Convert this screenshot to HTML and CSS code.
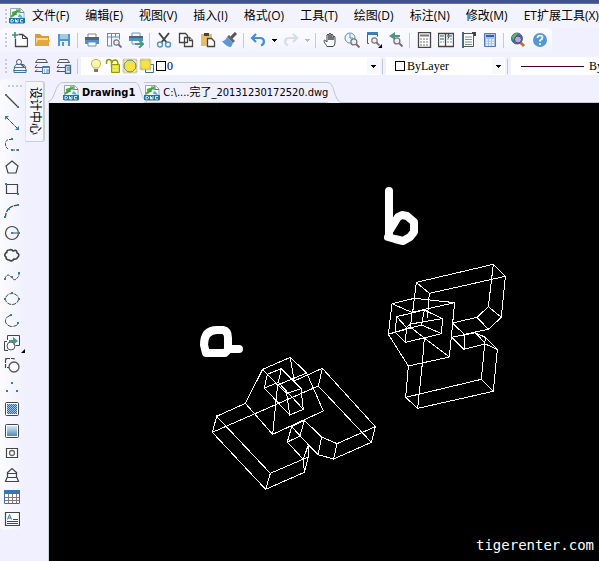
FILE: index.html
```html
<!DOCTYPE html>
<html lang="zh-CN">
<head>
<meta charset="utf-8">
<title>Drawing1</title>
<link rel="stylesheet" href="styles.css">
</head>
<body>
<svg class="defs" aria-hidden="true">
  <symbol id="dwg" viewBox="0 0 16 16"><path d="M1.500 .5h10l3.500 3.500v11.500h-13.500z" fill="#f4fbfb" stroke="#9aabb0"/><path d="M11 .5v4h4" fill="#fff" stroke="#6d8084"/><path d="M2 9l6-6M3 5l3-1 1 3" fill="none" stroke="#4caf3c" stroke-width="2"/><path d="M7 2h3v3M4 8l5-5" fill="none" stroke="#3a9a38" stroke-width="1.200"/><path d="M9 9l1-3 2 1 2 3z" fill="#4db1de"/><path d="M0 10h16v5H0z" fill="#1b76b0"/><path d="M2 11.500v2.500h1.500l1-1v-1l-1-.5zM6.500 11v3h1V12v2h1.500V11M14 11.500h-2.500v2.500H14" fill="none" stroke="#e4f6ff" stroke-width=".9"/></symbol>
  <symbol id="caret" viewBox="0 0 5 3"><path d="M0 0h5v1H4v1H3v1H2V2H1V1H0z"/></symbol>
  <symbol id="glass" viewBox="0 0 9 9"><circle cx="3.500" cy="3.500" r="2.700" fill="#eeedf7" stroke="#777" stroke-width="1.200"/><path d="M5.500 5.500l3 3" stroke="#806870" stroke-width="1.800"/></symbol>
  <symbol id="stack" viewBox="0 0 16 16"><path d="M3.500 1.500h8l2 3H1.500zM3 6.500l-2 3h12M3 11.500l-2 2h10" fill="none" stroke="#555"/></symbol>
</svg>
<header>
  <div class="titlebar"></div>
  <nav class="menu" aria-label="菜单">
    <span class="grip"></span>
    <svg class="icon"><use href="#dwg"/></svg>
    <a href="#">文件(F)</a><a href="#">编辑(E)</a><a href="#">视图(V)</a><a href="#">插入(I)</a><a href="#">格式(O)</a><a href="#">工具(T)</a><a href="#">绘图(D)</a><a href="#">标注(N)</a><a href="#">修改(M)</a><a href="#">ET扩展工具(X)</a>
  </nav>
  <div class="toolbar standard">
    <span class="grip"></span>
    <button aria-label="新建"><svg class="icon"><path d="M6.500 2.500h4l5 4v8h-12v-8" fill="#fff" stroke="#444" stroke-width="1.300"/><path d="M10.500 2.500v4h5" fill="none" stroke="#444"/><path d="M3 0v6M0 3h6" stroke="#3f927c" stroke-width="1.600"/></svg></button>
    <button aria-label="打开"><svg class="icon"><path d="M1 14V2h5l2 2h7v10z" fill="#d99b36"/><path d="M2 6h12v2H4l-2 5z" fill="#f7d999"/><path d="M4 8h12l-2 6H1z" fill="#e5a63d"/></svg></button>
    <button aria-label="保存"><svg class="icon"><path d="M2 2h12v12H2z" fill="#5198d4"/><path d="M4 2h8v5H4z" fill="#a9c7df"/><path d="M4 9h8v5H4z" fill="#eef2f7"/><path d="M6 10h2v4H6z" fill="#5198d4"/></svg></button>
    <span class="sep"></span>
    <button aria-label="打印"><svg class="icon"><path d="M4 7V2h8v5" fill="#fff" stroke="#888"/><path d="M1 6h14v6H1z" fill="#4f91c8"/><path d="M1 5h14v3H1z" fill="#566371"/><path d="M4 10h8v4H4z" fill="#fff" stroke="#5b92c1"/></svg></button>
    <button aria-label="打印预览"><svg class="icon"><path d="M1.500 1.500h12v6M1.500 1v13h5M1 5h13M5.500 1v13M9.500 1v4" fill="none" stroke="#4d91c7"/><use href="#glass" x="7" y="7" width="9" height="9"/></svg></button>
    <button aria-label="发布"><svg class="icon"><path d="M4 5V1h8v4M4 8h8v4H4z" fill="#fff" stroke="#6b96ba"/><path d="M1 4h14v5H1z" fill="#4f91c8"/><path d="M1 4h14v2H1z" fill="#59636e"/><path d="M7 12h7M11 8l4 4-4 4" fill="none" stroke="#499a82" stroke-width="2"/></svg></button>
    <span class="sep"></span>
    <button aria-label="剪切"><svg class="icon"><path d="M3 1l8 10M13 1L5 11" stroke="#444" stroke-width="2"/><g fill="none" stroke="#5794c6" stroke-width="1.400"><circle cx="4" cy="12.500" r="2.500"/><circle cx="12" cy="12.500" r="2.500"/></g></svg></button>
    <button aria-label="复制"><svg class="icon"><g fill="#fff" stroke="#444" stroke-width="1.300"><path d="M1.500 1.500h6l2 2v7h-8zM6.500 5.500h5l3 3v6h-8z"/><path d="M11.500 5.500v3h3"/></g></svg></button>
    <button aria-label="粘贴"><svg class="icon"><path d="M1 2h11v12H1z" fill="#e8bd68"/><path d="M4 1h5v3H4z" fill="#444"/><path d="M7.500 6.500h4l3 3v5h-7z" fill="#fff" stroke="#444" stroke-width="1.300"/></svg></button>
    <button aria-label="格式刷"><svg class="icon"><path d="M14 1l-5 5" stroke="#555" stroke-width="3"/><path d="M7 3l6 6-2 2-6-6z" fill="#63666b"/><path d="M5 5l6 6-2 4c-3 0-6-2-9-6 3 0 4-2 5-4z" fill="#5a98d2"/></svg></button>
    <span class="sep"></span>
    <button aria-label="放弃"><svg class="icon"><path d="M6 2L2 6l4 4M3 6h7c5 0 5 6 1 7.500" fill="none" stroke="#3e8fdc" stroke-width="2.200"/></svg></button>
    <button class="drop" aria-label="放弃列表"><svg class="caret"><use href="#caret"/></svg></button>
    <button aria-label="重做"><svg class="icon"><path d="M10 2l4 4-4 4M13 6H6C1 6 1 12 5 13.500" fill="none" stroke="#d6dce8" stroke-width="2.200"/></svg></button>
    <button class="drop off" aria-label="重做列表"><svg class="caret"><use href="#caret"/></svg></button>
    <span class="sep"></span>
    <button aria-label="平移"><svg class="icon"><path d="M5 14.500C4 12 1 10 2.500 8L5 10V3q1-1.500 2 0V8 2q1-1.500 2 0v6-5q1-1.500 2 0v5-3q1-1.500 2 0v5c0 3-1 4-2 4.500z" fill="#fff" stroke="#444"/></svg></button>
    <button aria-label="实时缩放"><svg class="icon"><circle cx="6" cy="6" r="5" fill="#f2f7ff" stroke="#4d91c7"/><path d="M6 2v4h3" fill="none" stroke="#4d91c7"/><use href="#glass" x="6" y="6" width="10" height="10"/></svg></button>
    <button aria-label="窗口缩放"><svg class="icon"><path d="M3 11.500H1.500v-10h10v3" fill="none" stroke="#555"/><path d="M1 0h11v3H1z" fill="#3c7dba"/><use href="#glass" x="5" y="5" width="9" height="9"/><path d="M16 12v4h-4z"/></svg></button>
    <button aria-label="缩放上一个"><svg class="icon"><path d="M7 0L1 4l6 4V5h5V3H7z" fill="#4a9983"/><use href="#glass" x="5" y="5" width="10" height="10"/></svg></button>
    <span class="sep"></span>
    <button aria-label="特性"><svg class="icon"><path d="M2.500 .5h12v15h-12z" fill="#fff" stroke="#444" stroke-width="1.300"/><path d="M4 3.500h9" stroke="#777" stroke-width="2"/><path d="M4 7h9M4 10h9M4 13h9" stroke="#777" stroke-dasharray="2 1"/></svg></button>
    <button aria-label="设计中心"><svg class="icon"><path d="M.5 1.500h15v13H.5zM7.500 1v14M10.500 1v5" fill="#fff" stroke="#444" stroke-width="1.300"/><path d="M2 4h4M2 7h4M9 4h5" stroke="#5b8db8" stroke-width="1.300"/><path d="M9 7h5M9 10h5M2 10h4" stroke="#888" stroke-dasharray="2 1"/></svg></button>
    <button aria-label="工具选项板"><svg class="icon"><path d="M2.500 1.500h11v13h-11z" fill="#fff" stroke="#555"/><path d="M3 0v16" stroke="#3c6c95" stroke-width="2"/><path d="M12 1h3v3" fill="none" stroke="#444" stroke-width="2"/><path d="M5 5h7M5 7.500h7M5 10h7M5 12.500h7" stroke="#7b90a2"/></svg></button>
    <button aria-label="计算器"><svg class="icon"><path d="M2.500 1.500h11v13h-11z" fill="#a5c1ed" stroke="#4e77c0"/><path d="M4 4h8" stroke="#355faa" stroke-width="2"/><path d="M4 8h8M4 10.500h8M4 13h8" stroke="#eff5ff" stroke-width="1.500" stroke-dasharray="2 1"/></svg></button>
    <span class="sep"></span>
    <button aria-label="查找"><svg class="icon"><path d="M10 10l4 4" stroke="#ca722c" stroke-width="3"/><circle cx="7" cy="6.500" r="5.500" fill="#287fa3" stroke="#58638a"/><path d="M2 5q2-4 6-4L6 4 3 8z" fill="#65b466"/><circle cx="8" cy="7.500" r="3.500" fill="#b6a6dd" stroke="#4f426d"/></svg></button>
    <button aria-label="帮助"><svg class="icon"><circle cx="8" cy="8" r="7" fill="#5397d3"/><path d="M5.500 6q0-2.500 2.500-2.500t2.500 2q0 1.500-2.500 3v1" fill="none" stroke="#fff" stroke-width="1.700"/><circle cx="8" cy="12" r="1" fill="#fff"/></svg></button>
  </div>
  <div class="toolbar layers">
    <span class="grip"></span>
    <button aria-label="图层特性"><svg class="icon"><path d="M4 6.500h8l2 3H2zM3 9.500l-1.500 3h13l-1.500-3M2 12.500v2h12v-2" fill="none" stroke="#3f759f"/><circle cx="7" cy="4" r="2.500" fill="#fff" stroke="#555"/><path d="M9 6l3 3" stroke="#555" stroke-width="1.500"/></svg></button>
    <button aria-label="图层状态"><svg class="icon"><use href="#stack"/><path d="M8.500 8.500h7v7h-7z" fill="#fff" stroke="#3f80b8"/><path d="M8 9.500h8M10 12h1M12 12h3M10 14h1M12 14h3" stroke="#3f80b8"/></svg></button>
    <button aria-label="图层工具"><svg class="icon"><use href="#stack"/><path d="M9.500 7.500h5v8h-5z" fill="#dceaf6" stroke="#3f6f99" stroke-width="1.300"/><path d="M11 10h3M11 12h3" stroke="#3f6f99"/></svg></button>
    <span class="sep"></span>
    <div class="field layer">
      <svg class="icon"><path d="M5.500 10C4.500 8 3 7 3.500 4.500c1-4 8-4 9 0C13 7 11.500 8 10.500 10z" fill="#fff4a7" stroke="#c5a94c"/><path d="M6 11h4v3H6z" fill="#77758d"/></svg>
      <svg class="icon"><path d="M1.500 6V4q0-2.500 2.500-2.500T6.500 4v5M7 5q0-3 3-3t3 4" fill="none" stroke="#979b00" stroke-width="1.500"/><path d="M6.500 6.500h8v8h-8z" fill="#d8de39" stroke="#969900"/><path d="M8 9h5M8 12h5" stroke="#fafb9b"/></svg>
      <svg class="icon"><rect x="1.500" y="1.500" width="13" height="13" fill="none" stroke="#b9a94c" stroke-width="2" stroke-dasharray="1 1"/><circle cx="8" cy="8" r="6" fill="#f8e23c" stroke="#5f8291"/></svg>
      <svg class="icon"><path d="M6.500 6.500h8v8h-8z" fill="#fff" stroke="#386e9f"/><rect x="1.500" y="1.500" width="10" height="10" fill="#e5dc78" stroke="#b9a94c" stroke-width="2" stroke-dasharray="1 1"/><circle cx="6.500" cy="6.500" r="4" fill="#f8e23c"/></svg>
      <span class="swatch"></span>
      <select aria-label="图层"><option>0</option></select>
      <span class="arrow"><svg class="caret"><use href="#caret"/></svg></span>
    </div>
    <span class="sep"></span>
    <div class="field color">
      <span class="swatch"></span>
      <select aria-label="颜色"><option>ByLayer</option></select>
      <span class="arrow"><svg class="caret"><use href="#caret"/></svg></span>
    </div>
    <span class="sep"></span>
    <div class="field linetype">
      <span class="line"></span>
      <select aria-label="线型"><option>ByLayer</option></select>
    </div>
  </div>
</header>
<main>
  <aside class="draw">
    <span class="grip wide"></span>
    <button aria-label="直线"><svg class="icon"><path d="M2 2l12 12" stroke="#444" stroke-width="1.300"/><path d="M1 1h2v2H1zM13 13h2v2h-2z" fill="#337bbd"/></svg></button>
    <button aria-label="构造线"><svg class="icon"><path d="M2 2l12 12" stroke="#444" stroke-dasharray="5 1"/><path d="M1 1h4L3 3 1 5zM15 15h-4l2-2 2-2z" fill="#337bbd"/></svg></button>
    <button aria-label="多段线"><svg class="icon"><path d="M8 2.500H5Q1.500 3 1.500 7T5 12.500M8 13h7" fill="none" stroke="#444" stroke-dasharray="3 1"/><path d="M7 1h2v2H7zM7 12h2v2H7zM13 12h2v2h-2z" fill="#337bbd"/></svg></button>
    <button aria-label="多边形"><svg class="icon"><path d="M8 2l6 5-2 7H4L2 7z" fill="none" stroke="#444" stroke-width="1.200"/></svg></button>
    <button aria-label="矩形"><svg class="icon"><path d="M2.500 3.500h11v9h-11z" fill="none" stroke="#444" stroke-width="1.200"/><path d="M1 2h2v2H1zM13 12h2v2h-2z" fill="#337bbd"/></svg></button>
    <button aria-label="圆弧"><svg class="icon"><path d="M1.500 14Q2 3 14 2" fill="none" stroke="#444" stroke-width="1.300" stroke-dasharray="4 1"/><path d="M0 13h2v2H0zM4 5h2v2H4zM13 1h2v2h-2z" fill="#337bbd"/></svg></button>
    <button aria-label="圆"><svg class="icon"><circle cx="8" cy="8" r="6.500" fill="none" stroke="#444" stroke-width="1.200"/><path d="M7 7h2v2H7zM14 7h2v2h-2z" fill="#337bbd"/><path d="M9 8h5" stroke="#444"/></svg></button>
    <button aria-label="修订云线"><svg class="icon"><path d="M3 5q-.5-2 2-2 3-1 4 1 4-2 4 2 3 1 1 4-2 3-4 2-2 3-5 1-3 0-3-3-3-2 1-5z" fill="none" stroke="#444" stroke-width="1.600"/></svg></button>
    <button aria-label="样条曲线"><svg class="icon"><path d="M1 10q2-7 6-2t6 1q2-1 2-4" fill="none" stroke="#444" stroke-dasharray="3 1"/><path d="M0 9h2v2H0zM7 7h2v2H7zM14 3h2v2h-2z" fill="#337bbd"/></svg></button>
    <button aria-label="椭圆"><svg class="icon"><ellipse cx="8" cy="8" rx="6.500" ry="5.500" fill="none" stroke="#444" stroke-dasharray="4 1"/><path d="M7 1h2v2H7zM0 7h2v2H0zM14 7h2v2h-2z" fill="#337bbd"/></svg></button>
    <button aria-label="椭圆弧"><svg class="icon"><path d="M6 2.500Q1.500 4 1.500 8T7 13.500q6 0 7-3" fill="none" stroke="#444" stroke-dasharray="5 1"/><path d="M6 1h2v2H6zM13 9h2v2h-2z" fill="#337bbd"/></svg></button>
    <button aria-label="插入块"><svg class="icon"><path d="M3.500 5V.5h12v10h-4M3 6.500H.5v9H4" fill="none" stroke="#444"/><circle cx="7" cy="11" r="4" fill="#fff" stroke="#555"/><path d="M5 5h4V2l5 4-5 4V7H5z" fill="#4a9983"/></svg><svg class="corner"><path d="M4 0v4H0z"/></svg></button>
    <button aria-label="创建块"><svg class="icon"><path d="M10 2.500V1.500H1.500v9H5" fill="none" stroke="#444" stroke-width="1.200" stroke-dasharray="4 1"/><circle cx="10" cy="10" r="5" fill="#fff" stroke="#555" stroke-width="1.300"/><path d="M1 1h2v2H1z" fill="#337bbd"/></svg></button>
    <button aria-label="点"><svg class="icon"><path d="M7 3h2v2H7zM2 11h2v2H2zM12 11h2v2h-2z" fill="#337bbd"/></svg></button>
    <button aria-label="图案填充"><svg class="icon"><defs><pattern id="check" width="2" height="2" patternUnits="userSpaceOnUse"><path d="M0 0h2v2H0z" fill="#9cc6ee"/><path d="M0 0h1v1H0zM1 1h1v1H1z" fill="#1f6dbd"/></pattern></defs><rect x="1.500" y="1.500" width="13" height="13" rx="1" fill="#fff" stroke="#444"/><path d="M3 3h10v10H3z" fill="url(#check)"/></svg></button>
    <button aria-label="渐变色"><svg class="icon"><defs><linearGradient id="shade" x2="0" y2="1"><stop stop-color="#d7e6f4"/><stop offset="1" stop-color="#4b8abf"/></linearGradient></defs><rect x="1.500" y="1.500" width="13" height="13" rx="1" fill="#fff" stroke="#444"/><path d="M3 3h10v10H3z" fill="url(#shade)"/></svg></button>
    <button aria-label="面域"><svg class="icon"><path d="M2.500 3.500h11v9h-11z" fill="#fff" stroke="#444" stroke-width="1.200"/><circle cx="8" cy="8" r="2.500" fill="none" stroke="#666" stroke-width="1.300"/></svg></button>
    <button aria-label="区域覆盖"><svg class="icon"><path d="M3 6l5-4.500L13 6M3.500 6.500h9v4h-9zM3 10.500L1.500 14.500h13L13 10.500" fill="none" stroke="#444" stroke-width="1.200"/></svg></button>
    <button aria-label="表格"><svg class="icon"><path d="M.5 1.500h15v13H.5z" fill="#fff" stroke="#3771ad"/><path d="M0 1h16v4H0z" fill="#3975b1"/><path d="M4.500 5v9M8.500 5v9M12.500 5v9M1 8.500h14M1 11.500h14" stroke="#89777c"/></svg></button>
    <button aria-label="多行文字"><svg class="icon"><path d="M1.500 1.500h14v13h-14z" fill="#fff" stroke="#444" stroke-width="1.200"/><path d="M3.500 8.500l2-5 2 5M4 7h3" fill="none" stroke="#3475b2"/><path d="M9 8.500h5M3 10.500h11M3 12.500h11" stroke="#444"/></svg></button>
  </aside>
  <button class="palette">设计中心</button>
  <section class="workspace">
    <div class="tabs" role="tablist">
      <svg class="edge left"><path class="rim" d="M0 20Q4 19 7 10Q10 .5 15 .5"/></svg>
      <button class="tab active" role="tab"><svg class="icon"><use href="#dwg"/></svg>Drawing1</button>
      <svg class="edge"><path class="rim" d="M0 .5Q3 .5 5 7Q8 18 12 20"/></svg>
      <button class="tab" role="tab"><svg class="icon"><use href="#dwg"/></svg>C:\....完了_20131230172520.dwg</button>
      <svg class="edge"><path class="rim" d="M0 .5Q4 1 6 9Q9 19 12 20"/></svg>
      <span class="rest"></span>
    </div>
    <div class="canvas">
      <svg class="model" role="img" aria-label="a, b">
        <g class="wire">
          <path transform="translate(141 207) scale(.33333)" d="M80 319L67 367L227 538L241 490ZM227 538L343 487L355 441L241 490M80 319L166 280L218 178L301 142L350 189L400 303L248 373L166 280M218 178L263 225L248 373M263 225L350 189M301 142L312 210M67 367L385 228L397 175L312 213M397 175L556 350L544 397L385 228M556 350L441 401L431 447L544 397M441 401L395 381L384 434L431 447M395 381L343 331L330 378L384 434M343 331L305 350L292 396L330 378M305 350L355 404V441M292 396L340 448L355 404M340 448L343 487M232 193L274 176L333 236L290 250ZM232 193L223 234L299 315L340 298L333 236M290 250L299 315M274 176L265 217L340 298M223 234L265 217"/>
          <path transform="translate(321 152) scale(.33333)" d="M139 82L370 28L406 64L178 115ZM370 28L355 155L394 187L406 64M355 155L321 187L355 223L394 187M321 187L247 204L283 238L355 223M139 82L128 172M178 115L172 190M247 204L245 247L282 283L283 238M245 247L316 233L346 247L382 283M282 283L346 267L382 283M316 233L346 265M346 247L334 373L370 409L382 283M334 373L107 427L143 460L370 409M107 427L115 333L55 238L66 146L133 130L254 143L238 306L115 333M254 143L125 172L66 146M133 130L128 172M125 172L122 217L163 249L238 306M55 238L122 217M163 249L157 325L143 460M80 185L163 165L217 191L215 236L107 262L75 232ZM163 165L155 210L215 236M155 210L75 232M80 185L109 217L107 262M109 217L122 207L217 191"/>
        </g>
        <g class="brush">
          <path d="M190 246H180L176 250H157L155 242Q155 227 168 227H174Q179 228 179 235V246"/>
          <path d="M340 88V134M339 134L346 136L354 138L361 134L365 129V119L358 113L353 112L349 114L341 127"/>
        </g>
      </svg>
      <p class="credit">tigerenter.com</p>
    </div>
  </section>
</main>
</body>
</html>
```
FILE: styles.css
```css
* { box-sizing: border-box; }

body {
  margin: 0;
  min-height: 100vh;
  display: flex;
  flex-direction: column;
  overflow: hidden;
  background: #f0f0fe;
  color: #000;
  font: 12px/16px "DejaVu Sans Condensed", "Noto Sans CJK SC", sans-serif;
}

.defs { position: absolute; width: 0; height: 0; }

button {
  padding: 0;
  border: 0;
  background: none;
  color: inherit;
  font: inherit;
}

.icon { display: block; flex: none; width: 16px; height: 16px; }
.caret { display: block; width: 5px; height: 3px; }

.titlebar { height: 4px; background: #405391; border-bottom: 1px solid #62739f; }

.menu {
  display: flex;
  align-items: center;
  height: 24px;
  padding-left: 5px;
  gap: 16px;
  white-space: nowrap;
  background: #f3f3fe;
  font-family: "Open Sans", "Noto Sans CJK SC", sans-serif;
}
.menu .icon { margin: 0 -9px 0 -14px; }
.menu a { color: inherit; text-decoration: none; }

.grip {
  flex: none;
  width: 2px;
  height: 14px;
  background: repeating-linear-gradient(#c5ccd2 0 2px, transparent 2px 4px);
}
.grip.wide {
  width: 14px;
  height: 2px;
  margin: 6px 0 3px 4px;
  background: repeating-linear-gradient(90deg, #c5ccd2 0 2px, transparent 2px 4px);
}

.toolbar { display: flex; align-items: center; padding-left: 5px; }
.toolbar .grip { margin-right: 2px; }
.toolbar button { display: grid; place-items: center; flex: none; width: 22px; height: 22px; }
.toolbar .drop { width: 11px; }
.toolbar .off { opacity: .25; }
.sep { flex: none; width: 1px; height: 15px; margin: 0 3px 0 2px; background: #c4cbd2; }

.standard {
  width: fit-content;
  height: 24px;
  border-radius: 4px;
  padding-right: 1px;
  background: linear-gradient(#fbfbff, #f3f3fe);
}

.layers { height: 26px; margin-top: 1px; }

.field {
  display: flex;
  align-items: center;
  height: 18px;
  background: #fff;
  font-family: "Liberation Serif", serif;
}
.field.layer { width: 299px; padding-left: 7px; gap: 1px; }
.field.color { width: 119px; padding-left: 9px; }
.field.linetype { flex: 1; min-width: 0; padding-left: 10px; overflow: hidden; }
.field select {
  flex: 1;
  min-width: 0;
  height: 18px;
  padding: 0 2px;
  border: 0;
  appearance: none;
  background: transparent;
  color: #000;
  font: inherit;
}
.layer select { padding: 0; }
.arrow { display: grid; place-items: center; width: 12px; height: 16px; margin-right: 1px; background: #f7f7fe; }
.swatch { flex: none; width: 10px; height: 10px; border: 1px solid #000; }
.field.linetype select { flex: none; width: 60px; padding-left: 5px; }
.line { flex: none; width: 63px; height: 1px; background: #400015; }

main { flex: 1; display: flex; align-items: flex-start; }

.draw {
  display: flex;
  flex-direction: column;
  width: 24px;
  padding-left: 4px;
  border-radius: 4px;
  background: linear-gradient(90deg, #fbfbff, #f1f1fe);
}
.draw button { position: relative; display: flex; align-items: center; height: 22px; }
.corner { position: absolute; right: -1px; bottom: 1px; width: 4px; height: 4px; }

.palette {
  width: 20px;
  height: 61px;
  margin: 2px 3px 0 1px;
  border: 1px solid #c8d1d3;
  border-left-color: #e1e5ec;
  border-right-width: 2px;
  border-radius: 0 3px 3px 0;
  background: #f5f5fc;
  writing-mode: vertical-rl;
  text-orientation: sideways;
}

.workspace {
  flex: 1;
  min-width: 0;
  align-self: stretch;
  display: flex;
  flex-direction: column;
}

.tabs { display: flex; align-items: flex-end; height: 24px; }
.tab {
  display: flex;
  align-items: center;
  height: 21px;
  gap: 3px;
  border-top: 1px solid #bdc8cc;
  border-bottom: 1px solid #c5cfd2;
  font-size: 11px;
  white-space: nowrap;
}
.tab.active { font-weight: bold; border-bottom-color: transparent; }
.edge { flex: none; width: 12px; height: 21px; fill: none; }
.edge.left { width: 15px; }
.edge + .tab:not(.active) { margin-left: -3px; }
.rim { fill: none; stroke: #bdc8cc; }
.rest { flex: 1; border-bottom: 1px solid #c5cfd2; }

.canvas {
  position: relative;
  flex: 1;
  display: flex;
  flex-direction: column;
  justify-content: flex-end;
  border-left: 1px solid #c8d6dc;
  background: #000;
}
.model { position: absolute; inset: 0; width: 100%; height: 100%; }
.wire { fill: none; stroke: #fff; shape-rendering: crispEdges; }
.wire path { vector-effect: non-scaling-stroke; }
.brush { fill: none; stroke: #fff; stroke-width: 8; stroke-linecap: round; stroke-linejoin: round; }

.credit {
  margin: 0;
  padding: 0 5px 8px;
  color: #fff;
  font: 14px/16px "DejaVu Sans Mono", monospace;
  text-align: right;
}
```
